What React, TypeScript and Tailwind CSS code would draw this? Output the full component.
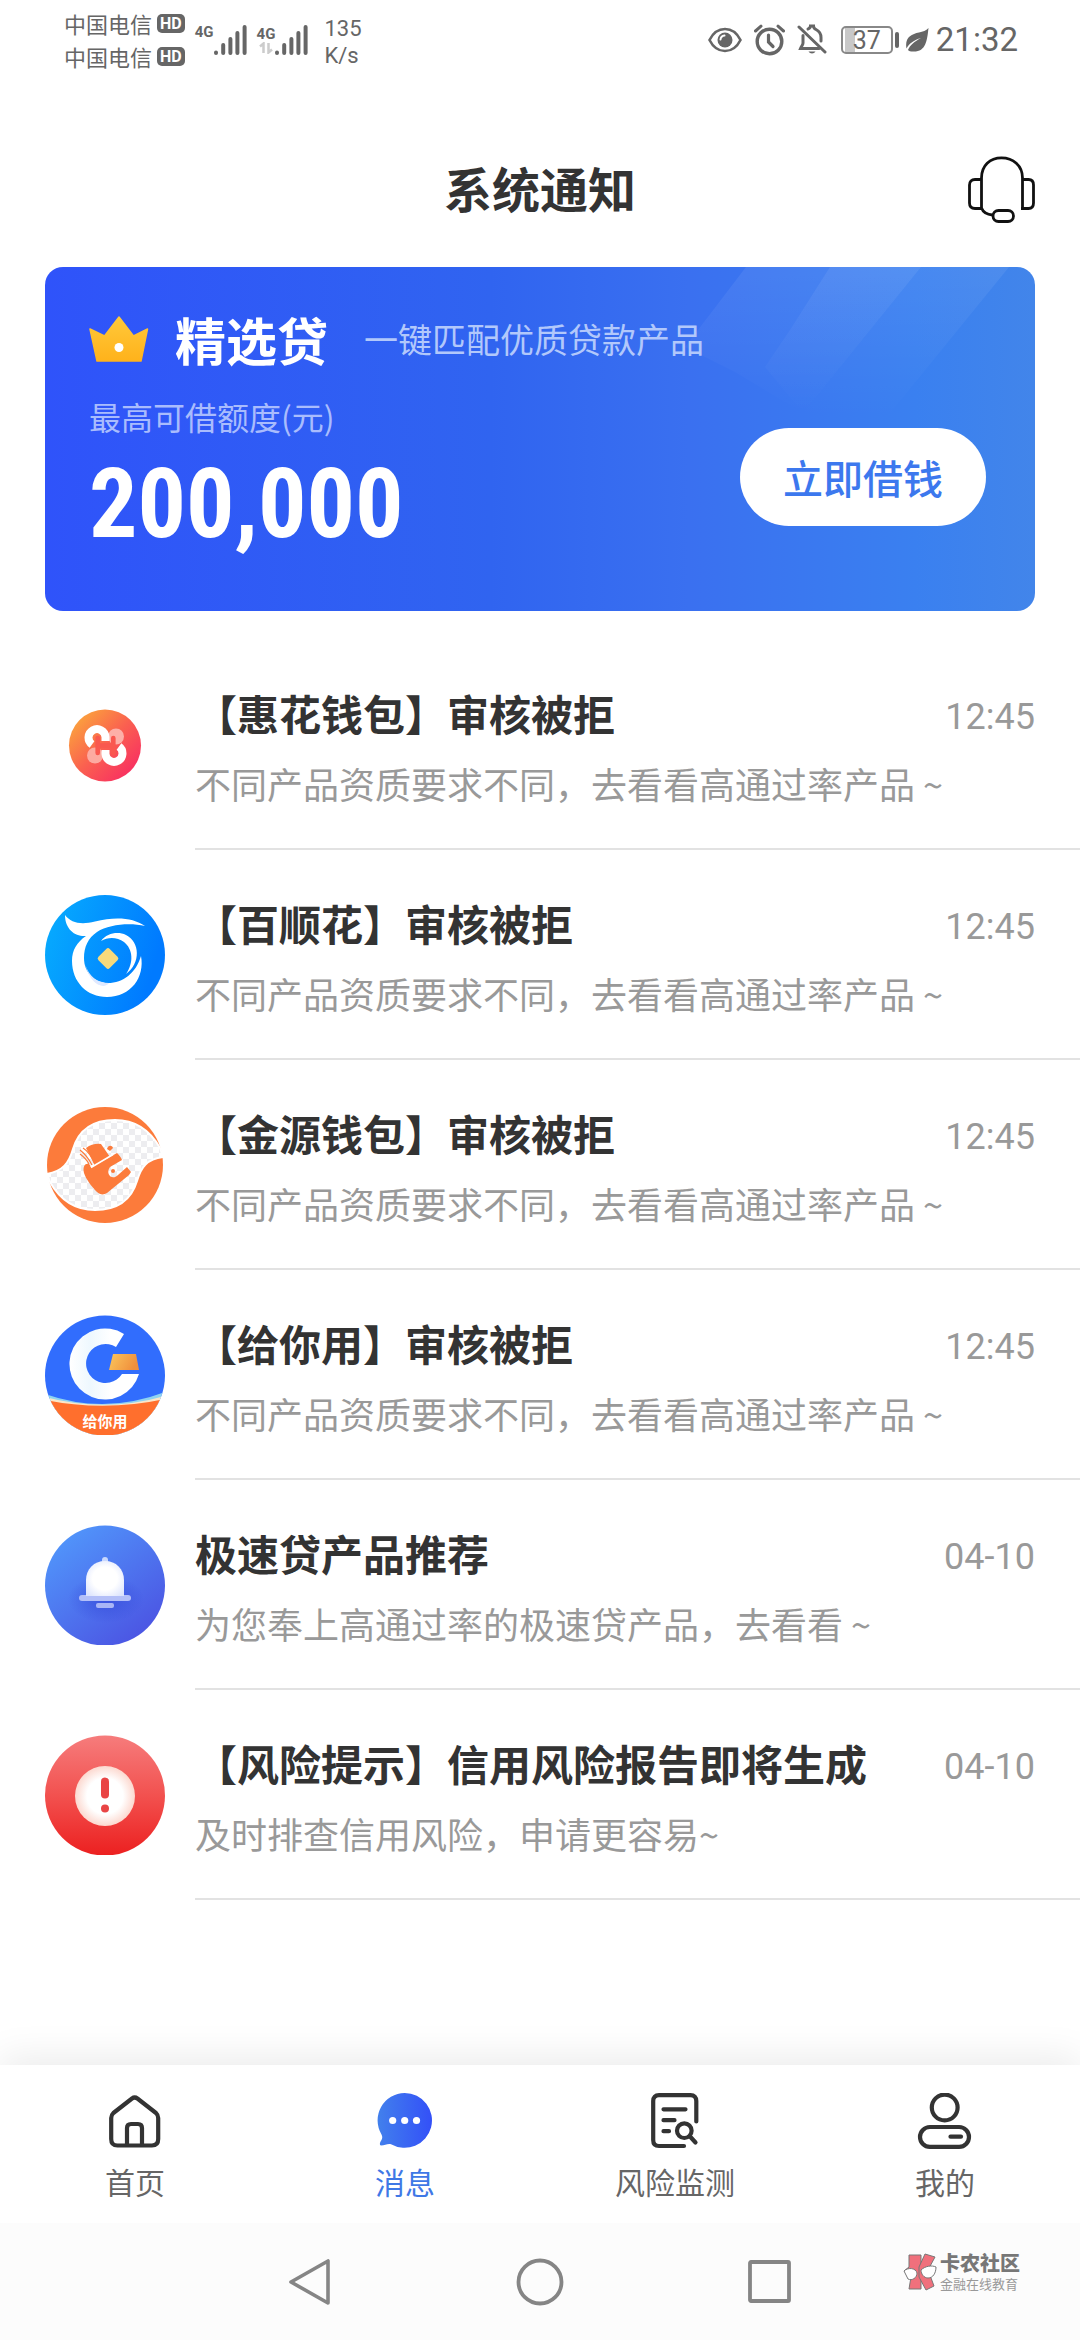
import { useState } from 'react';
import type { ReactNode } from 'react';

interface Notice {
  id: number;
  icon: ReactNode;
  title: string;
  desc: string;
  time: string;
}

function SignalBars() {
  return (
    <svg width="33" height="30" viewBox="0 0 33 30" stroke="#666" strokeWidth="4" strokeLinecap="round">
      <path d="M2 27.5V28M9.2 20V28M16.4 14V28M23.4 8V28M30.6 2V28" />
    </svg>
  );
}

function Carrier() {
  return (
    <div className="flex items-center gap-[5px]">
      <span className="text-[22px] leading-[33px]">中国电信</span>
      <span className="flex h-[19px] items-center rounded-[5px] bg-[#666] px-[3px] font-[Roboto,sans-serif] text-[16px] font-bold leading-none text-white">
        HD
      </span>
    </div>
  );
}

function StatusBar() {
  return (
    <div className="flex h-20 items-center justify-between pl-16 pr-[62px] text-[#666]">
      <div className="flex items-center">
        <div className="flex flex-col">
          <Carrier />
          <Carrier />
        </div>
        <div className="ml-[10px] flex items-center">
          <span className="mb-4 font-[Roboto,sans-serif] text-[15px] font-bold leading-4">4G</span>
          <SignalBars />
        </div>
        <div className="ml-[10px] flex items-center">
          <div className="flex flex-col items-center">
            <span className="font-[Roboto,sans-serif] text-[15px] font-bold leading-4">4G</span>
            <svg width="14" height="12" viewBox="0 0 14 12" fill="none" stroke="#ccc" strokeWidth="2.5">
              <path d="M1 4.500L4.500 1.500V11M9.500 1V10.500L13 7.500" />
            </svg>
          </div>
          <SignalBars />
        </div>
        <div className="ml-4 pt-1 font-[Roboto,sans-serif] text-[22px] leading-[27px]">
          <div>135</div>
          <div>K/s</div>
        </div>
      </div>
      <div className="flex items-center">
        <svg width="34" height="26" viewBox="0 0 34 26" fill="none">
          <path d="M1.500 13C5 6 10.500 2 17 2S29 6 32.500 13C29 20 23.500 24 17 24S5 20 1.500 13Z" stroke="#666" strokeWidth="2.6" />
          <circle cx="17" cy="13" r="7.500" fill="#666" />
          <path d="M12.500 12.500a4.500 4.500 0 0 1 4-4" stroke="#fff" strokeWidth="2" strokeLinecap="round" />
        </svg>
        <svg className="ml-3" width="31" height="32" viewBox="0 0 31 32" fill="none" stroke="#666" strokeLinecap="round">
          <circle cx="15.500" cy="17.500" r="12.300" strokeWidth="3.400" />
          <path d="M14.500 11v7l4.500 4.500" strokeWidth="3.200" />
          <path d="M1.500 7L7 2.200M29.500 7L24 2.200" strokeWidth="3" />
        </svg>
        <svg className="ml-3" width="30" height="32" viewBox="0 0 30 32" fill="none" stroke="#666" strokeWidth="3" strokeLinecap="round">
          <path d="M2 3L28 28" />
          <path d="M11 5c2-1 2.500-1.500 2.500-3h3c0 2 1 2.800 2.500 3.500C22 7 24 10 24 13.500V17" />
          <path d="M6 11.500V19c0 2-1.500 3-2.500 5.500H22" />
          <path d="M11.500 27.500c1.500 2.500 5.500 2.500 7 0z" fill="#666" stroke="none" />
        </svg>
        <div className="ml-[14px] flex h-[28px] w-[52px] items-center justify-center rounded-[5px] border-2 border-[#888] bg-[linear-gradient(90deg,#fff_2px,#c8c8c8_2px,#c8c8c8_12px,#fff_12px)] font-[Roboto,sans-serif] text-[25px] leading-none">
          37
        </div>
        <div className="ml-[2px] h-4 w-1 rounded-[2px] bg-[#666]" />
        <svg className="ml-[6px]" width="24" height="26" viewBox="0 0 24 26">
          <path d="M23.500 1C22 14 21 25 8 24.500 5.500 24.500 4 24 3 23c2-5 6.500-8.500 13-12C9 13 4 16.500 1.500 21.500-.5 11 6 7 14 5.500 18 4.800 21 3.500 23.500 1Z" fill="#666" />
        </svg>
        <span className="ml-[7px] font-[Roboto,sans-serif] text-[33px] leading-10">21:32</span>
      </div>
    </div>
  );
}

function Header() {
  return (
    <header className="grid grid-cols-[1fr_auto_1fr] items-start px-[45px] pb-[43px] pt-[76px]">
      <h1 className="col-start-2 text-[48px] font-bold leading-[62px]">系统通知</h1>
      <button type="button" aria-label="客服" className="justify-self-end">
        <svg width="67" height="68" viewBox="0 0 67 68" fill="none" stroke="#111" strokeWidth="2.800">
          <path d="M13.500 52V22C13.500 9.500 22 1.800 33.500 1.800S54.500 9.500 54.500 22V52" />
          <path d="M13.500 23.500H7C3.500 23.500 1.500 25.500 1.500 29V47C1.500 50.500 3.500 52.500 7 52.500H13.500" />
          <path d="M54.500 23.500H60.500C63.500 23.500 65.500 25.500 65.500 29V47C65.500 50.500 63.500 52.500 60.500 52.500H53" />
          <path d="M13.500 52C15 56 18.500 58.500 24.500 59" />
          <rect x="25" y="54.500" width="20.500" height="11" rx="5.500" />
        </svg>
      </button>
    </header>
  );
}

function LoanCard() {
  return (
    <section className="relative mx-[45px] mb-[29px] overflow-hidden rounded-[18px] bg-[linear-gradient(90deg,#2f53fa_0%,#3064f0_45%,#3a70f0_65%,#3a80f0_88%,#4285ea_100%)] pb-11 pl-11 pr-[49px] pt-9 text-white">
      <svg className="absolute right-0 top-0" width="390" height="180" viewBox="600 0 390 180">
        <defs>
          <linearGradient id="beam" x1="0" y1="0" x2="0" y2="1">
            <stop offset="0" stopColor="#fff" stopOpacity=".07" />
            <stop offset="1" stopColor="#fff" stopOpacity="0" />
          </linearGradient>
        </defs>
        <g fill="url(#beam)">
          <path d="M701 0H876L758 146L690 105L640 80Z" />
          <path d="M785 0H876L758 146L720 100L745 63Z" />
          <path d="M876 0H964L842 150H800L758 146Z" />
        </g>
      </svg>
      <div className="relative flex items-center">
        <svg width="60" height="48" viewBox="0 0 60 48">
          <defs>
            <linearGradient id="crown" x1="0" y1="0" x2="0" y2="1">
              <stop offset="0" stopColor="#ffc93a" />
              <stop offset="1" stopColor="#ffb21b" />
            </linearGradient>
          </defs>
          <path d="M30 2L44.500 21L58.500 14L52 46H8L1 14L15.500 21Z" fill="url(#crown)" stroke="url(#crown)" strokeWidth="1.500" strokeLinejoin="round" />
          <circle cx="30" cy="32.500" r="4.500" fill="#fff" />
        </svg>
        <h2 className="ml-[26px] text-[51px] font-bold leading-[72px]">精选贷</h2>
        <span className="ml-9 text-[34px] leading-[72px] text-[#b2c8fb]">一键匹配优质贷款产品</span>
      </div>
      <div className="relative flex items-center justify-between">
        <div>
          <div className="pt-4 text-[32px] leading-[50px] text-[#a9bcfd]">最高可借额度(元)</div>
          <div className="font-['Roboto_Condensed',Roboto,sans-serif] text-[96px] font-bold leading-[126px]">
            200,000
          </div>
        </div>
        <button type="button" className="mt-3 h-[98px] rounded-full bg-white px-[43px] text-[40px] font-medium text-[#3c78ee]">
          立即借钱
        </button>
      </div>
    </section>
  );
}

function HuihuaIcon() {
  return (
    <svg width="120" height="120" viewBox="0 0 120 120" fill="none">
      <defs>
        <linearGradient id="huihua" x1="0" y1="0" x2="1" y2="1">
          <stop offset="0.100" stopColor="#fba43c" />
          <stop offset="0.500" stopColor="#fa6050" />
          <stop offset="0.900" stopColor="#f82d62" />
        </linearGradient>
      </defs>
      <circle cx="60" cy="60.500" r="36" fill="url(#huihua)" />
      <circle cx="71" cy="51.500" r="8" fill="#fdb0a8" />
      <circle cx="50" cy="70.500" r="8" fill="#fdaaa0" />
      <path d="M47 59.500A8.500 8.500 0 1 1 60.500 52V56M74 61.500A8.500 8.500 0 1 1 60.500 69V65" stroke="#fff" strokeWidth="8" />
      <path d="M52.700 53V68M68.300 53V68M52.700 60.500H68.300" stroke="#f9584f" strokeWidth="4.600" strokeLinecap="round" />
    </svg>
  );
}

function BaishunIcon() {
  return (
    <svg width="120" height="120" viewBox="0 0 120 120" fill="none">
      <defs>
        <linearGradient id="baishun" x1="0" y1="0" x2="1" y2="0.300">
          <stop offset="0" stopColor="#07aefe" />
          <stop offset="1" stopColor="#007aff" />
        </linearGradient>
      </defs>
      <circle cx="60" cy="60" r="60" fill="url(#baishun)" />
      <path d="M20 20C26 28 36 30 50 26.500C70 21.500 88 22.500 100 31C84 27.500 64 29.500 52 37C43 43 39 52 39 63C39 78 50 88 63 88C78 88 91 78 96 61C100 82 86 102 62 102C42 102 27 87 27 66C27 55 32 47 41 41C31 42 20 35 20 20Z" fill="#fff" />
      <path d="M40 69C44 82 53 88 64 88C60 94 46 92 40 69Z" fill="#dfe9ff" />
      <path d="M56 46C62 38 73 36 81 40C95 47 96 68 81 79C89 68 88 54 79 47C72 42 63 42 56 46Z" fill="#fff" />
      <rect x="55" y="55.500" width="16" height="16" rx="2.500" transform="rotate(45 63 63.500)" fill="#f7da7c" />
    </svg>
  );
}

function JinyuanIcon() {
  return (
    <svg width="120" height="120" viewBox="0 0 120 120" fill="none">
      <defs>
        <pattern id="checker" width="12" height="12" patternUnits="userSpaceOnUse">
          <rect width="12" height="12" fill="#fff" />
          <path d="M0 0H6V6H0ZM6 6H12V12H6Z" fill="#ededf0" />
        </pattern>
      </defs>
      <circle cx="60" cy="60" r="58" fill="#fc7b3b" />
      <path d="M2 69C18 66 24 58 28 44C34 24 48 15 70 15C92 15 106 27 115 43L118 52C102 54 96 62 92 76C86 96 72 105 50 105C28 105 14 93 5 77Z" fill="url(#checker)" stroke="#fff" strokeWidth="2" />
      {/* notes sticking out of the wallet */}
      <path d="M41 43Q48 38 56 39L65 52L50 60Z" fill="#fc7b3b" />
      <path d="M38 43C43 46 47 52 50 60M35 45C40 49 44 54 47 60M35 49C39 52 42 55 44 59" stroke="#fc7b3b" strokeWidth="1.200" />
      <path d="M62 44C63 40 67 40 68 43L65 46Z" fill="#fc7b3b" />
      {/* wallet body with the clasp cut out */}
      <path d="M47 62L72 48C74 50 76 52 77 55L65 62C60 69 67 76 73 70L82 62L86 67L84 70L62 88C59 90 55 90 52 87C46 81 41 74 39 68C37 60 42 57 45 60C47 64 43 66 41 63" fill="#fc7b3b" />
      <circle cx="68" cy="66" r="2" fill="#fc7b3b" />
      <path d="M46 62.500L68 49.500" stroke="#fff" strokeWidth="1.500" />
    </svg>
  );
}

function GeiniIcon() {
  return (
    <svg width="120" height="120" viewBox="0 0 120 120" fill="none">
      <defs>
        <clipPath id="geiniClip">
          <circle cx="60" cy="60.500" r="60" />
        </clipPath>
        <linearGradient id="gold" x1="0" y1="0" x2="1" y2="0.300">
          <stop offset="0" stopColor="#fbc75c" />
          <stop offset="1" stopColor="#f08f3c" />
        </linearGradient>
        <linearGradient id="cShade" x1="0" y1="0" x2="1" y2="0">
          <stop offset="0" stopColor="#fff" />
          <stop offset="0.300" stopColor="#eef8fe" />
          <stop offset="0.600" stopColor="#fff" />
        </linearGradient>
      </defs>
      <g clipPath="url(#geiniClip)">
        <rect width="120" height="121" fill="#316dfd" />
        <path d="M0 79Q60 100 120 77V121H0Z" fill="#8fd3f0" />
        <path d="M0 82Q60 98 120 81V121H0Z" fill="#fbe6c8" />
        <path d="M0 85Q60 97 120 84V121H0Z" fill="#ff6f2d" />
      </g>
      <path d="M79 19A35.500 35.500 0 1 0 94 59H77A19.500 19.500 0 1 1 71 32Z" fill="url(#cShade)" />
      <path d="M68 39H91L94 55H64Z" fill="url(#gold)" />
      <text x="60" y="112" textAnchor="middle" fontSize="15" fontWeight="700" fill="#fff">
        给你用
      </text>
    </svg>
  );
}

function BellIcon() {
  return (
    <svg width="120" height="120" viewBox="0 0 120 120" fill="none">
      <defs>
        <linearGradient id="bellBg" x1="0.100" y1="0.100" x2="0.800" y2="1">
          <stop offset="0" stopColor="#5196fb" />
          <stop offset="1" stopColor="#4b52e2" />
        </linearGradient>
        <radialGradient id="bellFill" cx="0.500" cy="0.500" r="0.650">
          <stop offset="0.500" stopColor="#fff" />
          <stop offset="1" stopColor="#dbe3fd" />
        </radialGradient>
        <radialGradient id="bellShade">
          <stop offset="0" stopColor="#3348d8" stopOpacity=".7" />
          <stop offset="1" stopColor="#3348d8" stopOpacity="0" />
        </radialGradient>
      </defs>
      <circle cx="60" cy="60.500" r="60" fill="url(#bellBg)" />
      <ellipse cx="61" cy="74" rx="38" ry="24" fill="url(#bellShade)" />
      <rect x="57" y="32" width="6" height="10" rx="3" fill="#c9d8fd" />
      <rect x="34" y="70" width="52" height="6" rx="3" fill="#b3bff8" />
      <rect x="51" y="78" width="18" height="5" rx="2" fill="#a9b6f6" />
      <path d="M41 71V55C41 44 49 36 60 36S79 44 79 55V71Z" fill="url(#bellFill)" />
    </svg>
  );
}

function AlertIcon() {
  return (
    <svg width="120" height="120" viewBox="0 0 120 120" fill="none">
      <defs>
        <linearGradient id="alertBg" x1="0" y1="0" x2="0" y2="1">
          <stop offset="0" stopColor="#f67c7c" />
          <stop offset="0.500" stopColor="#f2514f" />
          <stop offset="1" stopColor="#ec2020" />
        </linearGradient>
        <radialGradient id="alertFill">
          <stop offset="0.600" stopColor="#fff" />
          <stop offset="1" stopColor="#fcd8cf" />
        </radialGradient>
      </defs>
      <circle cx="60" cy="60.500" r="60" fill="url(#alertBg)" />
      <circle cx="60" cy="61" r="30" fill="url(#alertFill)" />
      <rect x="56" y="42.500" width="8" height="21" rx="4" fill="#e94545" />
      <circle cx="60" cy="73.500" r="4" fill="#e94545" />
    </svg>
  );
}

const notices: Notice[] = [
  { id: 1, icon: <HuihuaIcon />, title: '【惠花钱包】审核被拒', desc: '不同产品资质要求不同，去看看高通过率产品 ~', time: '12:45' },
  { id: 2, icon: <BaishunIcon />, title: '【百顺花】审核被拒', desc: '不同产品资质要求不同，去看看高通过率产品 ~', time: '12:45' },
  { id: 3, icon: <JinyuanIcon />, title: '【金源钱包】审核被拒', desc: '不同产品资质要求不同，去看看高通过率产品 ~', time: '12:45' },
  { id: 4, icon: <GeiniIcon />, title: '【给你用】审核被拒', desc: '不同产品资质要求不同，去看看高通过率产品 ~', time: '12:45' },
  { id: 5, icon: <BellIcon />, title: '极速贷产品推荐', desc: '为您奉上高通过率的极速贷产品，去看看 ~', time: '04-10' },
  { id: 6, icon: <AlertIcon />, title: '【风险提示】信用风险报告即将生成', desc: '及时排查信用风险，申请更容易~', time: '04-10' },
];

function NoticeRow({ notice }: { notice: Notice }) {
  return (
    <li className="flex items-center pl-[45px]">
      <div className="shrink-0">{notice.icon}</div>
      <div className="ml-[30px] min-w-0 flex-1 border-b-2 border-[#e2e2e2] pb-[38px] pr-[45px] pt-[43px]">
        <div className="flex items-start justify-between">
          <h3 className="text-[42px] font-bold leading-[60px]">{notice.title}</h3>
          <time className="pt-1 font-[Roboto,sans-serif] text-[36px] leading-[60px] text-[#999]">{notice.time}</time>
        </div>
        <p className="mt-[9px] text-[36px] leading-[54px] text-[#999]">{notice.desc}</p>
      </div>
    </li>
  );
}

const tabs = [
  {
    key: 'home',
    label: '首页',
    icon: (
      <g stroke="#333" strokeWidth="4.200" strokeLinecap="round" strokeLinejoin="round">
        <path d="M25 5.500Q27.700 3.500 30.400 5.500L49 20Q51.200 22 51.200 25V46Q51.200 52.500 45 52.500H10.500Q4.200 52.500 4.200 46V25Q4.200 22 6.400 20Z" />
        <path d="M20 52V35Q20 31 24 31H31Q35 31 35 35V52" />
      </g>
    ),
  },
  {
    key: 'message',
    label: '消息',
    icon: (
      <>
        <defs>
          <linearGradient id="chat" x1="0" y1="0" x2="1" y2="0">
            <stop offset="0" stopColor="#4280ec" />
            <stop offset="1" stopColor="#3350f8" />
          </linearGradient>
        </defs>
        <path d="M27.700 0A27.400 27.400 0 1 1 14 51.200C10 50.500 8 52.500 4 52.500C2 52 3 49 4.500 47C5.500 45 5.500 43.500 4.500 41.500A27.400 27.400 0 0 1 27.700 0Z" fill="url(#chat)" />
        <circle cx="15.700" cy="27.500" r="3.600" fill="#fff" />
        <circle cx="27.700" cy="27.500" r="3.600" fill="#fff" />
        <circle cx="39.500" cy="27.500" r="3.600" fill="#fff" />
      </>
    ),
  },
  {
    key: 'risk',
    label: '风险监测',
    icon: (
      <g stroke="#333" strokeWidth="4.200" strokeLinecap="round">
        <path d="M49.300 28.500V8Q49.300 2.200 43.500 2.200H12Q6.200 2.200 6.200 8V47Q6.200 53 12 53H37" />
        <path d="M16.500 16.300H38.500M16.500 27.200H27.500M16.500 38.200H22M43.500 44L48.500 49.500" />
        <circle cx="37.300" cy="37.700" r="7.300" />
      </g>
    ),
  },
  {
    key: 'mine',
    label: '我的',
    icon: (
      <g stroke="#333" strokeWidth="4.200" strokeLinecap="round">
        <circle cx="27.700" cy="14.500" r="12.900" />
        <rect x="3" y="34" width="49" height="19.800" rx="9.900" />
        <path d="M33.500 43.700H44" />
      </g>
    ),
  },
];

function TabBar() {
  const [active, setActive] = useState('message');

  return (
    <nav className="mt-auto flex bg-white shadow-[0_-8px_36px_rgba(0,0,0,0.08)]">
      {tabs.map((tab) => (
        <button
          key={tab.key}
          type="button"
          onClick={() => setActive(tab.key)}
          className="flex flex-1 flex-col items-center pb-[22px] pt-7"
        >
          <svg width="56" height="56" viewBox="0 0 56 56" fill="none">
            {tab.icon}
          </svg>
          <span className={`mt-3 text-[30px] leading-10 ${active === tab.key ? 'text-[#3f78e6]' : 'text-[#666]'}`}>
            {tab.label}
          </span>
        </button>
      ))}
    </nav>
  );
}

function Watermark() {
  return (
    <div className="absolute right-[60px] top-[28px] flex items-center gap-[2px] text-[#777]">
      <svg width="36" height="38" viewBox="0 0 36 38" stroke="#777" strokeWidth="1">
        <path d="M7 2H19V36H7L9 24L2 18L7 14Z" fill="#f0707c" />
        <path d="M23 1L33 4L26 17L32 33L24 37L17 24V14Z" fill="#f0707c" />
        <path d="M2 18C6 14 14 15 15 20C15 25 10 28 6 26Z" fill="#fff" />
        <path d="M19 17C23 13 30 12 34 14C34 20 31 25 26 25C22 25 19 21 19 17Z" fill="#fff" />
      </svg>
      <div className="flex flex-col">
        <span className="text-[20px] font-black leading-6">卡农社区</span>
        <span className="text-[13px] leading-[18px] text-[#999]">金融在线教育</span>
      </div>
    </div>
  );
}

function SystemNav() {
  return (
    <div className="relative flex h-[117px] items-center justify-center gap-[182px] bg-[#fcfcfc]">
      <button type="button" aria-label="返回">
        <svg width="48" height="48" viewBox="0 0 48 48" fill="none" stroke="#858585" strokeWidth="3.600" strokeLinejoin="round">
          <path d="M42 3V45L5 24Z" />
        </svg>
      </button>
      <button type="button" aria-label="主屏幕">
        <svg width="48" height="48" viewBox="0 0 48 48" fill="none" stroke="#858585" strokeWidth="3.800">
          <circle cx="24" cy="24" r="21.500" />
        </svg>
      </button>
      <button type="button" aria-label="最近任务">
        <svg width="48" height="48" viewBox="0 0 48 48" fill="none" stroke="#858585" strokeWidth="3.800" strokeLinejoin="round">
          <rect x="4" y="4" width="39" height="39" rx="1" />
        </svg>
      </button>
      <Watermark />
    </div>
  );
}

export default function App() {
  return (
    <div className="flex min-h-screen flex-col bg-white font-['Noto_Sans_CJK_SC',sans-serif] text-[#333]">
      <StatusBar />
      <Header />
      <main>
        <LoanCard />
        <ul>
          {notices.map((notice) => (
            <NoticeRow key={notice.id} notice={notice} />
          ))}
        </ul>
      </main>
      <TabBar />
      <SystemNav />
    </div>
  );
}
